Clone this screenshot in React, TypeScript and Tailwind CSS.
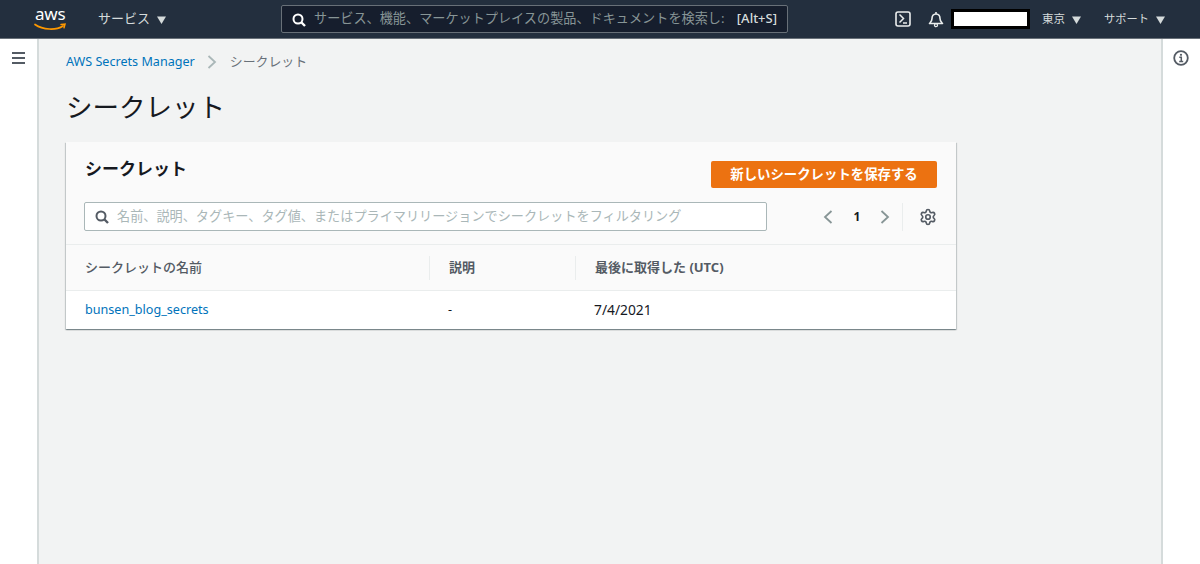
import { Settings } from 'lucide-react';

const FONT = "font-['Noto_Sans','Noto_Sans_CJK_JP',sans-serif]";

function Caret() {
  return (
    <svg width="9" height="8" viewBox="0 0 9 8" className="ml-[7px] mt-px">
      <path d="M0 .5h9L4.500 8z" fill="currentColor" />
    </svg>
  );
}

function SearchIcon({ className }: { className?: string }) {
  return (
    <svg width="14" height="14" viewBox="0 0 14 14" className={className}>
      <circle cx="6" cy="6" r="4.500" fill="none" stroke="currentColor" strokeWidth="2" />
      <path d="M9.500 9.500l3.500 3.500" fill="none" stroke="currentColor" strokeWidth="2.400" />
    </svg>
  );
}

function Chevron({ left, className }: { left?: boolean; className?: string }) {
  return (
    <svg width="10" height="14" viewBox="0 0 10 14" className={className}>
      <path d={left ? 'M8.500 1L2 7l6.500 6' : 'M1.500 1L8 7l-6.500 6'} fill="none" stroke="currentColor" strokeWidth="1.800" />
    </svg>
  );
}

function AwsLogo() {
  return (
    <div className="relative w-[33px] h-[30px]">
      <span className="absolute left-[1px] top-[-1px] text-[17px] leading-[22px] text-white tracking-[-0.2px]">aws</span>
      <svg width="33" height="8" viewBox="0 0 33 8" className="absolute left-0 top-[19px]">
        <path d="M1 1.500C9 7 22 7.500 29 3" fill="none" stroke="#f90" strokeWidth="1.700" strokeLinecap="round" />
        <path d="M27 1.500l4-.3-1 3.600" fill="none" stroke="#f90" strokeWidth="1.500" strokeLinecap="round" />
      </svg>
    </div>
  );
}

function TopBar() {
  return (
    <header className="h-[39px] shrink-0 bg-[#232f3e] border-b border-[#687078] flex items-center text-[#d5dbdb] text-[12px]">
      <div className="ml-[34px] w-[32px]">
        <AwsLogo />
      </div>
      <div className="ml-[32px] flex items-center w-[183px] text-[13px] text-[#d5dbdb]">
        サービス
        <Caret />
      </div>
      <div className="w-[507px] h-[28px] bg-[#161e2d] border border-[#687078] rounded-[2px] flex items-center pl-[10px] pr-[10px]">
        <SearchIcon className="text-white shrink-0 mt-px" />
        <span className="ml-[8px] text-[13.150px] text-[#879596] whitespace-nowrap">サービス、機能、マーケットプレイスの製品、ドキュメントを検索し:</span>
        <span className="ml-auto text-[13px] text-[#d5dbdb] font-medium">[Alt+S]</span>
      </div>
      <svg width="16" height="16" viewBox="0 0 16 16" className="ml-[107px] text-[#eaeded]">
        <rect x="1" y="1" width="14" height="14" rx="2" fill="none" stroke="currentColor" strokeWidth="1.600" />
        <path d="M4.500 3.500L8.500 7.500 4.500 11.500M8 12h4" fill="none" stroke="currentColor" strokeWidth="1.500" />
      </svg>
      <svg width="16" height="17" viewBox="0 0 16 17" className="ml-[17px] text-[#eaeded]">
        <path d="M8 3C5.200 3 4 5 4 7.500 4 10 2.500 11 1.500 12.500h13C13.500 11 12 10 12 7.500 12 5 10.800 3 8 3zM8 1v2" fill="none" stroke="currentColor" strokeWidth="1.600" strokeLinejoin="round" />
        <circle cx="8" cy="14.200" r="1.500" fill="none" stroke="currentColor" strokeWidth="1.300" />
      </svg>
      <div className="ml-[7px] w-[79px] h-[20px] bg-white border-[3px] border-black" />
      <div className="ml-[12px] flex items-center w-[62px] text-[11.500px]">
        東京
        <Caret />
      </div>
      <div className="flex items-center text-[11.250px]">
        サポート
        <Caret />
      </div>
    </header>
  );
}

export default function App() {
  return (
    <div className={`${FONT} w-[1200px] h-[564px] overflow-hidden flex flex-col bg-[#f2f3f3]`}>
      <TopBar />
      <div className="flex flex-1 min-h-0">
        <aside className="w-[39px] shrink-0 bg-white border-r-2 border-[#d5dbdb] pl-[12px] pt-[13px]">
          <svg width="13" height="12" viewBox="0 0 13 12" className="text-[#545b64]">
            <path d="M0 1h13M0 6h13M0 11h13" fill="none" stroke="currentColor" strokeWidth="2" />
          </svg>
        </aside>
        <main className="flex-1 pl-[27px] pt-[14px]">
          <nav className="flex items-center text-[12.600px] h-[18px]">
            <span className="text-[#0073bb]">AWS Secrets Manager</span>
            <Chevron className="text-[#aab7b8] ml-[12px] mr-[13px]" />
            <span className="text-[#687078] text-[12.900px]">シークレット</span>
          </nav>
          <h1 className="mt-[18px] text-[26.500px] leading-[36px] text-[#16191f]">シークレット</h1>
          <section className="mt-[17px] w-[890px] bg-white shadow-[0_1px_1px_0_rgba(0,28,36,0.3),1px_1px_1px_0_rgba(0,28,36,0.15),-1px_1px_1px_0_rgba(0,28,36,0.15)]">
            <div className="bg-[#fafafa] h-[103px] pl-[18px] pr-[19px] border-b border-[#eaeded]">
              <div className="flex justify-between pt-[19px]">
                <h2 className="text-[17px] leading-[18px] font-bold text-[#16191f] mt-[-1px] pl-px">シークレット</h2>
                <button className="w-[226px] h-[27px] bg-[#ec7211] rounded-[2px] text-white text-[13.400px] font-bold">新しいシークレットを保存する</button>
              </div>
              <div className="flex items-center mt-[14px]">
                <div className="w-[683px] h-[29px] bg-white border border-[#aab7b8] rounded-[2px] flex items-center pl-[10px]">
                  <SearchIcon className="text-[#545b64] shrink-0" />
                  <span className="ml-[8px] text-[13.150px] text-[#aab7b8] whitespace-nowrap">名前、説明、タグキー、タグ値、またはプライマリリージョンでシークレットをフィルタリング</span>
                </div>
                <Chevron left className="ml-[56px] text-[#879596]" />
                <span className="ml-[20px] w-[8px] text-center text-[12px] font-bold text-[#16191f]">1</span>
                <Chevron className="ml-[19px] text-[#879596]" />
                <div className="ml-[12px] h-[28px] border-l border-[#eaeded]" />
                <Settings size={18} strokeWidth={2.200} className="ml-[16px] mt-px text-[#545b64]" />
              </div>
            </div>
            <div className="h-[46px] bg-[#fafafa] border-b border-[#eaeded] grid grid-cols-[363px_146px_1fr] items-center text-[13px] font-bold text-[#545b64]">
              <div className="pl-[19px] font-medium">シークレットの名前</div>
              <div className="pl-[19px] h-[24px] leading-[22px] border-l border-[#eaeded]">説明</div>
              <div className="pl-[19px] h-[24px] leading-[22px] border-l border-[#eaeded]">最後に取得した (UTC)</div>
            </div>
            <div className="h-[38px] grid grid-cols-[363px_146px_1fr] items-center text-[12.600px] text-[#16191f]">
              <div className="pl-[19px] text-[#0073bb]">bunsen_blog_secrets</div>
              <div className="pl-[19px]">-</div>
              <div className="pl-[19px] text-[13.800px]">7/4/2021</div>
            </div>
          </section>
        </main>
        <aside className="w-[39px] shrink-0 bg-white border-l-2 border-[#d5dbdb] pl-[10px] pt-[11px]">
          <svg width="16" height="16" viewBox="0 0 16 16" className="text-[#545b64]">
            <circle cx="8" cy="8" r="6.800" fill="none" stroke="currentColor" strokeWidth="1.800" />
            <circle cx="8" cy="4.800" r="1.100" fill="currentColor" />
            <path d="M6.300 7.200H8.300V11.500M6.200 11.500h4" fill="none" stroke="currentColor" strokeWidth="1.500" />
          </svg>
        </aside>
      </div>
    </div>
  );
}
